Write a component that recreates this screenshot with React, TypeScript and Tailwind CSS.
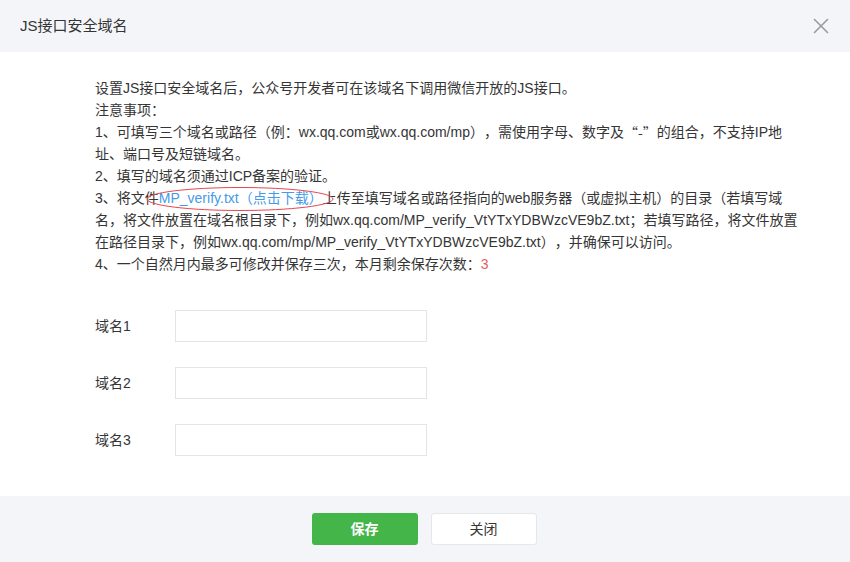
import { X } from 'lucide-react';

const font = { fontFamily: '"Liberation Sans", "Noto Sans CJK SC", sans-serif' };
const cjk = { fontFamily: '"Noto Sans CJK SC", sans-serif' };

function DomainRow({ label }: { label: string }) {
  return (
    <div className="flex items-center">
      <label className="w-[80px] text-[14px] text-[#353535]">{label}</label>
      <input
        type="text"
        className="h-[32px] w-[252px] border border-[#e4e4e7] bg-white px-2 text-[14px] outline-none"
      />
    </div>
  );
}

export default function App() {
  return (
    <div className="flex h-[562px] w-[850px] flex-col bg-white [text-spacing-trim:space-all]" style={font}>
      <header className="flex h-[52px] shrink-0 items-center justify-between bg-[#f4f5f9] pl-[20px] pr-[16px]">
        <h2 className="text-[15px] text-[#353535]">JS接口安全域名</h2>
        <button className="text-[#9a9a9a]">
          <X size={26} strokeWidth={1.5} />
        </button>
      </header>

      <main className="flex-1 pl-[95px] pt-[25px]">
        <div className="text-[14px] leading-[22px] text-[#353535] whitespace-nowrap">
          <p>设置JS接口安全域名后，公众号开发者可在该域名下调用微信开放的JS接口。</p>
          <p>注意事项：</p>
          <p>
            1、可填写三个域名或路径（例：wx.qq.com或wx.qq.com/mp），需使用字母、数字及
            <span className="inline-block h-[22px] align-top" style={cjk}>“-”</span>的组合，不支持IP地
            <br />
            址、端口号及短链域名。
          </p>
          <p>2、填写的域名须通过ICP备案的验证。</p>
          <p>
            3、将文件
            <span className="relative">
              <a href="#" className="text-[#459ae9]">MP_verify.txt（点击下载）</a>
              <svg
                className="pointer-events-none absolute left-[-13px] top-[-4px] h-[26px] w-[188px]"
                viewBox="0 0 188 26"
                fill="none"
              >
                <ellipse cx="94" cy="13" rx="93" ry="11.5" stroke="#e8474c" strokeWidth="1" />
              </svg>
            </span>
            上传至填写域名或路径指向的web服务器（或虚拟主机）的目录（若填写域
            <br />
            名，将文件放置在域名根目录下，例如wx.qq.com/MP_verify_VtYTxYDBWzcVE9bZ.txt；若填写路径，将文件放置
            <br />
            在路径目录下，例如wx.qq.com/mp/MP_verify_VtYTxYDBWzcVE9bZ.txt），并确保可以访问。
          </p>
          <p>
            4、一个自然月内最多可修改并保存三次，本月剩余保存次数：<span className="text-[#e15f63]">3</span>
          </p>
        </div>

        <form className="mt-[35px] flex flex-col gap-[25px]">
          <DomainRow label="域名1" />
          <DomainRow label="域名2" />
          <DomainRow label="域名3" />
        </form>
      </main>

      <footer className="flex h-[66px] shrink-0 items-center justify-center gap-[13px] bg-[#f4f5f9] pr-[2px]">
        <button className="h-[32px] w-[106px] rounded-[3px] bg-[#44b549] text-[14px] font-bold text-white">
          保存
        </button>
        <button className="h-[32px] w-[106px] rounded-[3px] border border-[#e4e8eb] bg-white text-[14px] text-[#353535]">
          关闭
        </button>
      </footer>
    </div>
  );
}
